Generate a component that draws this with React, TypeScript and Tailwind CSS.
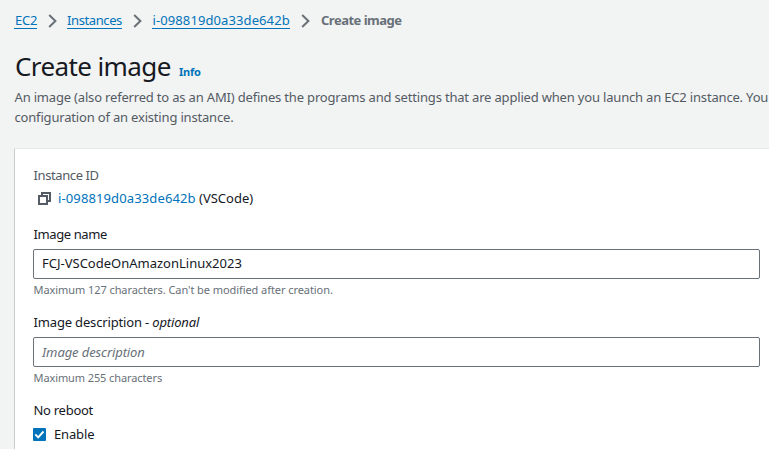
import type { ReactNode } from 'react';

function Chevron() {
  return (
    <svg className="ml-[11px] mr-[10px] mt-px h-[14px] w-[9px] shrink-0" viewBox="0 0 9 14" fill="none" stroke="#687078" strokeWidth="2">
      <path d="M1.2 1l6.2 6-6.2 6" />
    </svg>
  );
}

function Crumb({ children, width }: { children: ReactNode; width: string }) {
  return (
    <a className={`block h-[19px] shrink-0 self-start border-b border-solid border-b-[#0073bb] leading-[21px] text-[#0073bb] ${width}`}>{children}</a>
  );
}

function CopyIcon() {
  return (
    <svg className="ml-px mt-px h-[14px] w-[14px] shrink-0" viewBox="0 0 14 14" fill="none" stroke="#545b64" strokeWidth="2">
      <path d="M4 5V1h8v8H9" />
      <rect x="1" y="4" width="8" height="8" />
    </svg>
  );
}

export default function App() {
  return (
    <div className="flex h-[449px] w-[769px] flex-col overflow-hidden whitespace-nowrap bg-[#f2f3f3] pl-[14px] font-['Noto_Sans',sans-serif] text-[13px] leading-5 text-[#16191f]">
      <nav className="mt-[10px] flex h-5 items-center">
        <Crumb width="w-[23px] pl-px tracking-[-0.2px]">EC2</Crumb>
        <Chevron />
        <Crumb width="w-[55px] tracking-[-0.4px]">Instances</Crumb>
        <Chevron />
        <Crumb width="w-[138px] pl-[0.5px] tracking-[0.1px]">i-098819d0a33de642b</Crumb>
        <Chevron />
        <span className="pl-px font-bold tracking-[-0.5px] text-[#687078]">Create image</span>
      </nav>
      <h1 className="mt-[18px] flex h-9 items-baseline text-[26px] leading-9">
        <span className="w-[165px] pl-px tracking-[-0.6px]">Create image</span>
        <a className="text-[11px] font-bold tracking-[-0.2px] text-[#0073bb]">Info</a>
      </h1>
      <p className="mt-[3px] pl-[0.5px] tracking-[-0.18px] text-[#545b64]">
        <span>An image (also referred to as an AMI) defines the programs and settings that are applied when you launch an EC2 instance. You</span>
        <br />
        <span>configuration of an existing instance.</span>
      </p>
      <main className="mt-[21px] flex h-[301px] flex-col border-l border-t border-l-[#c9cccf] border-t-[#e6e9e9] bg-white pl-[18px] pt-4">
        <div className="pl-[0.5px] tracking-[-0.4px] text-[#545b64]">Instance ID</div>
        <div className="mt-[3px] flex h-5 items-center pl-1">
          <CopyIcon />
          <a className="ml-[6px] w-[141px] tracking-[0.12px] text-[#0073bb]">i-098819d0a33de642b</a>
          <span>(VSCode)</span>
        </div>
        <label className="mt-4 pl-[0.5px] tracking-[-0.4px]">Image name</label>
        <div className="mt-[5px] flex h-[30px] w-[727px] items-center rounded-[2px] border border-[#687078] pb-[2px] pl-2">
          FCJ-VSCodeOnAmazonLinux2023
        </div>
        <div className="mt-[3px] h-4 pl-[0.5px] text-[11px] leading-4 tracking-[-0.07px] text-[#687078]">Maximum 127 characters. Can't be modified after creation.</div>
        <label className="mt-[14px] pl-[0.5px] tracking-[-0.16px]">
          Image description - <i>optional</i>
        </label>
        <div className="mt-[5px] flex h-[30px] w-[727px] items-center rounded-[2px] border border-[#687078] pl-2 italic tracking-[-0.1px] text-[#687078]">
          Image description
        </div>
        <div className="mt-[3px] h-4 pl-[0.5px] text-[11px] leading-4 tracking-[-0.1px] text-[#687078]">Maximum 255 characters</div>
        <div className="mt-[14px] pl-[0.5px] tracking-[-0.28px]">No reboot</div>
        <label className="mt-1 flex items-center">
          <span className="mt-px flex h-[13px] w-[13px] items-center justify-center rounded-[1px] bg-[#0073bb]">
            <svg className="h-[13px] w-[13px]" viewBox="0 0 13 13" fill="none" stroke="white" strokeWidth="1.9">
              <path d="M2.3 6.4l2.9 2.9 5.3-5.8" />
            </svg>
          </span>
          <span className="ml-2 tracking-[-0.15px]">Enable</span>
        </label>
      </main>
    </div>
  );
}
